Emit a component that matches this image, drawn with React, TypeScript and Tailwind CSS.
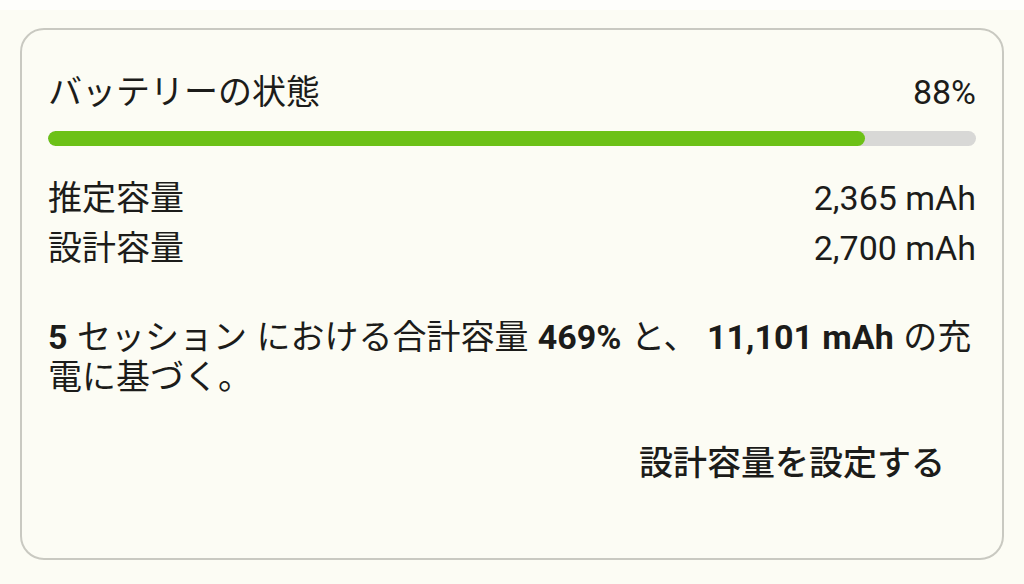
import React from "react";

export default function App() {
  const pct = 88;
  return (
    <div
      className="w-[1024px] h-[584px] bg-[#fcfcf4] text-[#1c1c1a] overflow-hidden"
      style={{ fontFamily: 'Roboto, "Noto Sans CJK JP", sans-serif' }}
    >
      <div className="h-[10px] bg-[#fefefb]" />
      <div className="mt-[18px] mx-[20px] h-[532px] rounded-[24px] border-2 border-[#c9c9c1] bg-[#fcfcf4] px-[26px] pt-[42px]">
        <div className="flex justify-between items-center text-[34px] leading-[40px]">
          <span>バッテリーの状態</span>
          <span>88%</span>
        </div>
        <div className="mt-[19px] h-[15px] rounded-full bg-[#d8d8d6] overflow-hidden">
          <div className="h-full rounded-full bg-[#6cc117]" style={{ width: `${pct}%` }} />
        </div>
        <div className="mt-[27px] text-[34px] leading-[50px]">
          <div className="flex justify-between">
            <span>推定容量</span>
            <span>2,365 mAh</span>
          </div>
          <div className="flex justify-between">
            <span>設計容量</span>
            <span>2,700 mAh</span>
          </div>
        </div>
        <p className="mt-[44px] text-[34px] leading-[40px] [word-spacing:1px]">
          <b className="font-bold">5</b> セッション における合計容量 <b className="font-bold">469%</b> と、 <b className="font-bold">11,101 mAh</b> の充電に基づく。
        </p>
        <div className="flex justify-end mt-[46px]">
          <button className="px-[31px] py-0 text-[34px] leading-[40px] font-medium text-[#1c1c1a]">
            設計容量を設定する
          </button>
        </div>
      </div>
    </div>
  );
}
